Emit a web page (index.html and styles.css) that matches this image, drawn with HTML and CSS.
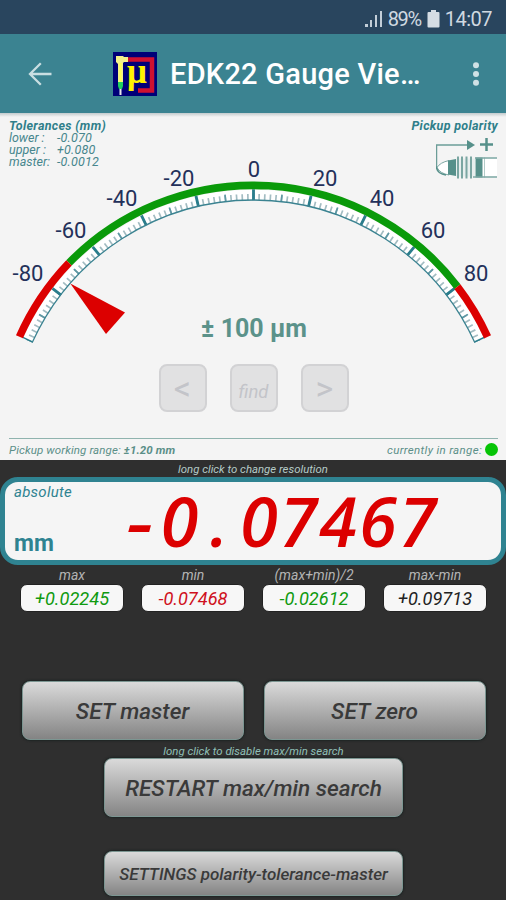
FILE: index.html
```
<!DOCTYPE html>
<html lang="en">
<head>
<meta charset="utf-8" />
<meta name="viewport" content="width=device-width, initial-scale=1.0" />
<title>EDK22 Gauge Viewer</title>
<link rel="stylesheet" href="styles.css">
</head>

<body>

	<div class="statusbar">
		<svg width="18" height="18" viewBox="0 0 18 18" fill="#c3ced8">
			<rect x="0" y="14" width="3" height="3" />
			<rect x="5" y="10" width="2" height="7" />
			<rect x="10" y="5" width="2" height="12" />
			<rect x="15" y="1" width="2" height="16" />
		</svg>
		<span class="percent">89%</span>
		<svg width="13" height="18" viewBox="0 0 13 18" fill="#d5dde4">
			<path d="M1.500 2H4V0h5v2h2.500q1 0 1 1v13.500q0 1-1 1h-10q-1 0-1-1V3q0-1 1-1z" />
		</svg>
		<span class="clock">14:07</span>
	</div>

	<div class="appbar">
		<svg class="back" width="24" height="24" viewBox="0 0 24 24" fill="none" stroke="#c9dee2" stroke-width="2.300">
			<path d="M23.500 12H2M12.800 1.300L2 12l10.800 10.700" />
		</svg>
		<svg class="logo" width="44" height="44" viewBox="0 0 44 44">
			<rect width="44" height="44" fill="#000078" />
			<path d="M13 7.500H39V38.500H25" fill="none" stroke="#cf1030" stroke-width="4.500" />
			<path d="M3 4h7l1 1h4v5h-4l-1 1v19H5V12L3 10z" fill="#f5f08a" />
			<path d="M7.500 11v19" stroke="#ffff50" stroke-width="2" />
			<path d="M5 30h5v4l-1 3H6l-1-3z" fill="#20d060" />
			<path d="M7.500 37v6" stroke="#e8e8e8" stroke-width="2" />
			<text class="mu" x="14" y="31">μ</text>
		</svg>
		<h1>EDK22 Gauge Vie…</h1>
		<svg class="more" width="8" height="24" viewBox="0 0 8 24" fill="#d0e1e5">
			<circle cx="4" cy="3.200" r="3" /><circle cx="4" cy="12" r="3" /><circle cx="4" cy="20.800" r="3" />
		</svg>
	</div>

	<div class="panel">

		<!-- dial: centre 253.5,330  full scale = 65.6 degrees -->
		<div class="dial">
			<svg class="scale" width="506" height="245" viewBox="0 0 506 245">
				<g transform="translate(0 1)">
				<path d="M27.620 226.400A248 248 0 0 1 479.380 226.400" fill="none" stroke="#fff" stroke-width="10" />
				<g fill="none">
					<path class="minor" pathLength="100" d="M29.450 227.350A246 246 0 0 1 477.550 227.350" />
					<path class="medium" pathLength="20" d="M29 227.150A246.500 246.500 0 0 1 478 227.150" />
					<path class="major" pathLength="10" d="M27.620 226.400A248 248 0 0 1 479.380 226.400" />
					<path stroke="#3b8391" stroke-width="1.300" d="M32.200 228.600A243 243 0 0 1 474.800 228.600" />
				</g>
				<g fill="none" stroke-width="7.600">
					<path stroke="#0a9a0a" d="M69 148.900A257 257 0 0 1 457.400 172.600" />
					<path stroke="#dc0000" d="M19.450 222.830A257 257 0 0 1 69 148.900M457.400 172.600A257 257 0 0 1 487.550 222.830" />
				</g>
				</g>
				<path d="M70.300 170.500L125 199.500L106 221z" fill="#dc0000" />
				<g class="numbers">
					<text x="28" y="168">-80</text>
					<text x="71" y="125">-60</text>
					<text x="122" y="92.500">-40</text>
					<text x="179" y="72.500">-20</text>
					<text x="254" y="63.500">0</text>
					<text x="325" y="72.500">20</text>
					<text x="382" y="92.500">40</text>
					<text x="433" y="125">60</text>
					<text x="476" y="168">80</text>
				</g>
				<text class="span" x="254" y="224">± 100 µm</text>
			</svg>

			<div class="corners">
				<dl class="tolerances">
					<dt class="title">Tolerances (mm)</dt>
					<dt>lower :</dt><dd>-0.070</dd>
					<dt>upper :</dt><dd>+0.080</dd>
					<dt>master:</dt><dd>-0.0012</dd>
				</dl>
				<div class="polarity">
					<div class="title">Pickup polarity</div>
					<svg width="62" height="48" viewBox="0 0 62 48">
						<g transform="translate(-1 4.500)">
						<path d="M34 8.500H1.500V31" fill="none" stroke="#6b9d98" stroke-width="1.500" />
						<path d="M32 3.500l8 5-8 5z" fill="#56908a" />
						<path d="M45 8h13M51.500 1.500v13" stroke="#56908a" stroke-width="2.500" />
						<path d="M14 24Q5 26 2 31Q5 37 14 38.500z" fill="#fff" stroke="#7fa8a4" />
						<path d="M1.500 30q0 7 9.500 8.500" fill="none" stroke="#56908a" stroke-width="1.500" />
						<path d="M13 24l8-1.500v17l-8-1.500z" fill="#56908a" />
						<path d="M21 22h19v18H21z" fill="#e8efee" />
						<path d="M23 20v22M27 20v22M31.500 20v22M36 20v22" stroke="#7ba6a2" stroke-width="2" />
						<path d="M40 21h22v20H40z" fill="#fff" />
						<path d="M40.500 21h7v20h-7z" fill="#56908a" />
						<path d="M49.500 21v20" stroke="#b3cbc8" />
						<path d="M40 21.500h22M38 40.500h24" stroke="#7ba6a2" stroke-width="1.500" />
						</g>
					</svg>
				</div>
			</div>
		</div>

		<div class="search">
			<button>&lt;</button>
			<button class="find">find</button>
			<button>&gt;</button>
		</div>

		<div class="range">
			<span class="working">Pickup working range: <b>±1.20 mm</b></span>
			<span class="current">currently in range:</span>
			<span class="led"></span>
		</div>
	</div>

	<p class="hint">long click to change resolution</p>

	<div class="display">
		<div class="mode">
			<span>absolute</span>
			<b>mm</b>
		</div>
		<div class="value">
			<i class="sign">-</i><i>0</i><i>.</i><i>0</i><i>7</i><i>4</i><i>6</i><i>7</i>
		</div>
	</div>

	<div class="stats">
		<div>max<output class="green">+0.02245</output></div>
		<div>min<output class="red">-0.07468</output></div>
		<div>(max+min)/2<output class="green">-0.02612</output></div>
		<div>max-min<output>+0.09713</output></div>
	</div>

	<div class="actions">
		<div class="pair">
			<button>SET master</button>
			<button>SET zero</button>
		</div>
		<p class="hint disable">long click to disable max/min search</p>
		<button class="restart">RESTART max/min search</button>
		<button class="settings">SETTINGS polarity-tolerance-master</button>
	</div>

</body>
</html>
```

FILE: styles.css
```
* { box-sizing: border-box; }

html, body { height: 100%; }

body {
	background: #2f2f2f;
	color: #333;
	font-family: Roboto, "Liberation Sans", sans-serif;
	margin: 0;
	overflow: hidden;
}

button {
	font-family: inherit;
	padding: 0;
}

/* top bars */

.statusbar {
	display: flex;
	align-items: center;
	justify-content: flex-end;
	height: 34px;
	padding: 3px 14px 0 0;
	background: #29455e;
	color: #d0d9e1;
	font-size: 20px;
}

.percent { margin: 0 6px 0 5px; letter-spacing: -1.400px; }

.clock { margin-left: 5px; letter-spacing: -0.5px; }

.appbar {
	display: flex;
	align-items: center;
	height: 79px;
	padding: 0 26px 0 28px;
	background: #3b8391;
	color: #fff;
}

.logo { margin-left: 61px; }

.mu {
	font: bold 35px "Liberation Serif", serif;
	fill: #fff200;
}

h1 {
	flex: 1;
	margin: 0 0 0 13px;
	font-size: 29px;
	font-weight: 500;
	letter-spacing: .25px;
	line-height: 36px;
	padding-top: 1px;
	white-space: nowrap;
}

/* gauge panel */

.panel {
	height: 347px;
	background: linear-gradient(#c3cbcd, #f4f4f4 4px);
}

.dial { display: grid; }

.scale, .corners { grid-area: 1 / 1; }

.minor {
	stroke: #a3bcc2;
	stroke-width: 6;
	stroke-dasharray: .3 .7;
	stroke-dashoffset: .15;
}

.medium {
	stroke: #5f98a4;
	stroke-width: 7;
	stroke-dasharray: .06 .94;
	stroke-dashoffset: .03;
}

.major {
	stroke: #2a7d8c;
	stroke-width: 11;
	stroke-dasharray: .05 .95;
	stroke-dashoffset: .025;
}

.numbers {
	font-size: 22px;
	fill: #23305a;
	text-anchor: middle;
}

.span {
	font-size: 25px;
	font-weight: 700;
	fill: #5b928a;
	text-anchor: middle;
}

.corners {
	display: flex;
	justify-content: space-between;
	align-items: flex-start;
	padding: 7px 8px 0 9px;
	color: #47868d;
	font-size: 12.500px;
	font-style: italic;
	line-height: 12px;
}

.corners .title {
	font-size: 12.500px;
	font-weight: 700;
	letter-spacing: .32px;
	color: #2f7f8a;
}

.tolerances {
	display: grid;
	grid-template-columns: 48px auto;
	margin: 0;
}

.tolerances .title { grid-column: 1 / 3; }

.tolerances dd { margin: 0; letter-spacing: .2px; }

.polarity {
	display: flex;
	flex-direction: column;
	align-items: flex-end;
}

.search {
	display: flex;
	justify-content: center;
	gap: 23px;
	padding: 6px 0 26px 1px;
}

.search button {
	width: 48px;
	height: 48px;
	border: 2px solid #d2d2d4;
	border-radius: 8px;
	background: #e1e1e2;
	color: #c3c4c9;
	font-size: 34px;
	font-weight: 400;
}

.search .find {
	padding-top: 8px;
	font-size: 18.500px;
	font-style: italic;
}

.range {
	display: flex;
	align-items: center;
	height: 22px;
	margin: 0 8px 0 9px;
	border-top: 1px solid #8fb3ae;
	color: #5b8f88;
	font-size: 11.500px;
	font-style: italic;
	letter-spacing: .12px;
}

.current { margin-left: auto; letter-spacing: .35px; }

.led {
	width: 13px;
	height: 13px;
	margin-left: 3px;
	border-radius: 50%;
	background: #06c406;
}

/* readout */

.hint {
	height: 17px;
	margin: 0;
	color: #b5cbc8;
	font-size: 11.400px;
	font-style: italic;
	line-height: 19px;
	text-align: center;
}

.display {
	display: flex;
	height: 88px;
	border: 5px solid #2f8391;
	border-radius: 18px;
	background: #f5f5f5;
	color: #2f8391;
}

.mode {
	display: flex;
	flex-direction: column;
	justify-content: space-between;
	width: 115px;
	padding: 1px 0 3px 9px;
	font-size: 15px;
	font-style: italic;
	letter-spacing: .25px;
}

.mode b { font-size: 23px; font-style: normal; letter-spacing: 0; }

.value {
	display: flex;
	color: #dc0000;
	font-family: "Open Sans", "Noto Sans", sans-serif;
	font-size: 68px;
	font-weight: 600;
	line-height: 77px;
}

.value i { width: 39.700px; text-align: center; }

.value .sign { transform: scaleX(1.25); }

.stats {
	display: flex;
	gap: 17px;
	padding: 2px 19px 0 20px;
	color: #b4b4b4;
	font-size: 14px;
	font-style: italic;
	line-height: 17px;
	text-align: center;
}

.stats div { width: 104px; }

.stats output {
	display: block;
	height: 28px;
	border: 1px solid #222;
	border-radius: 7px;
	background: #f7f7f7;
	color: #222;
	font-size: 18.200px;
	line-height: 27px;
}

.stats .green { color: #109a10; }

.stats .red { color: #cf1020; }

/* buttons */

.actions {
	display: flex;
	flex-direction: column;
	align-items: center;
	padding: 69px 0 0 1px;
}

.pair { display: flex; gap: 20px; }

.actions button {
	width: 222px;
	height: 59px;
	padding-top: 2px;
	border: 1px solid #7c9692;
	border-radius: 8px;
	background: linear-gradient(#dadada, #848484);
	box-shadow: 0 0 2px 1px #1d2423;
	color: #3a3a3a;
	font-size: 22.600px;
	font-style: italic;
	font-weight: 500;
}

.disable { height: 18px; line-height: 22px; color: #8fc0b8; }

.actions .restart { width: 299px; }

.actions .settings {
	width: 299px;
	height: 45px;
	margin-top: 34px;
	padding-top: 0;
	font-size: 17px;
}
```
